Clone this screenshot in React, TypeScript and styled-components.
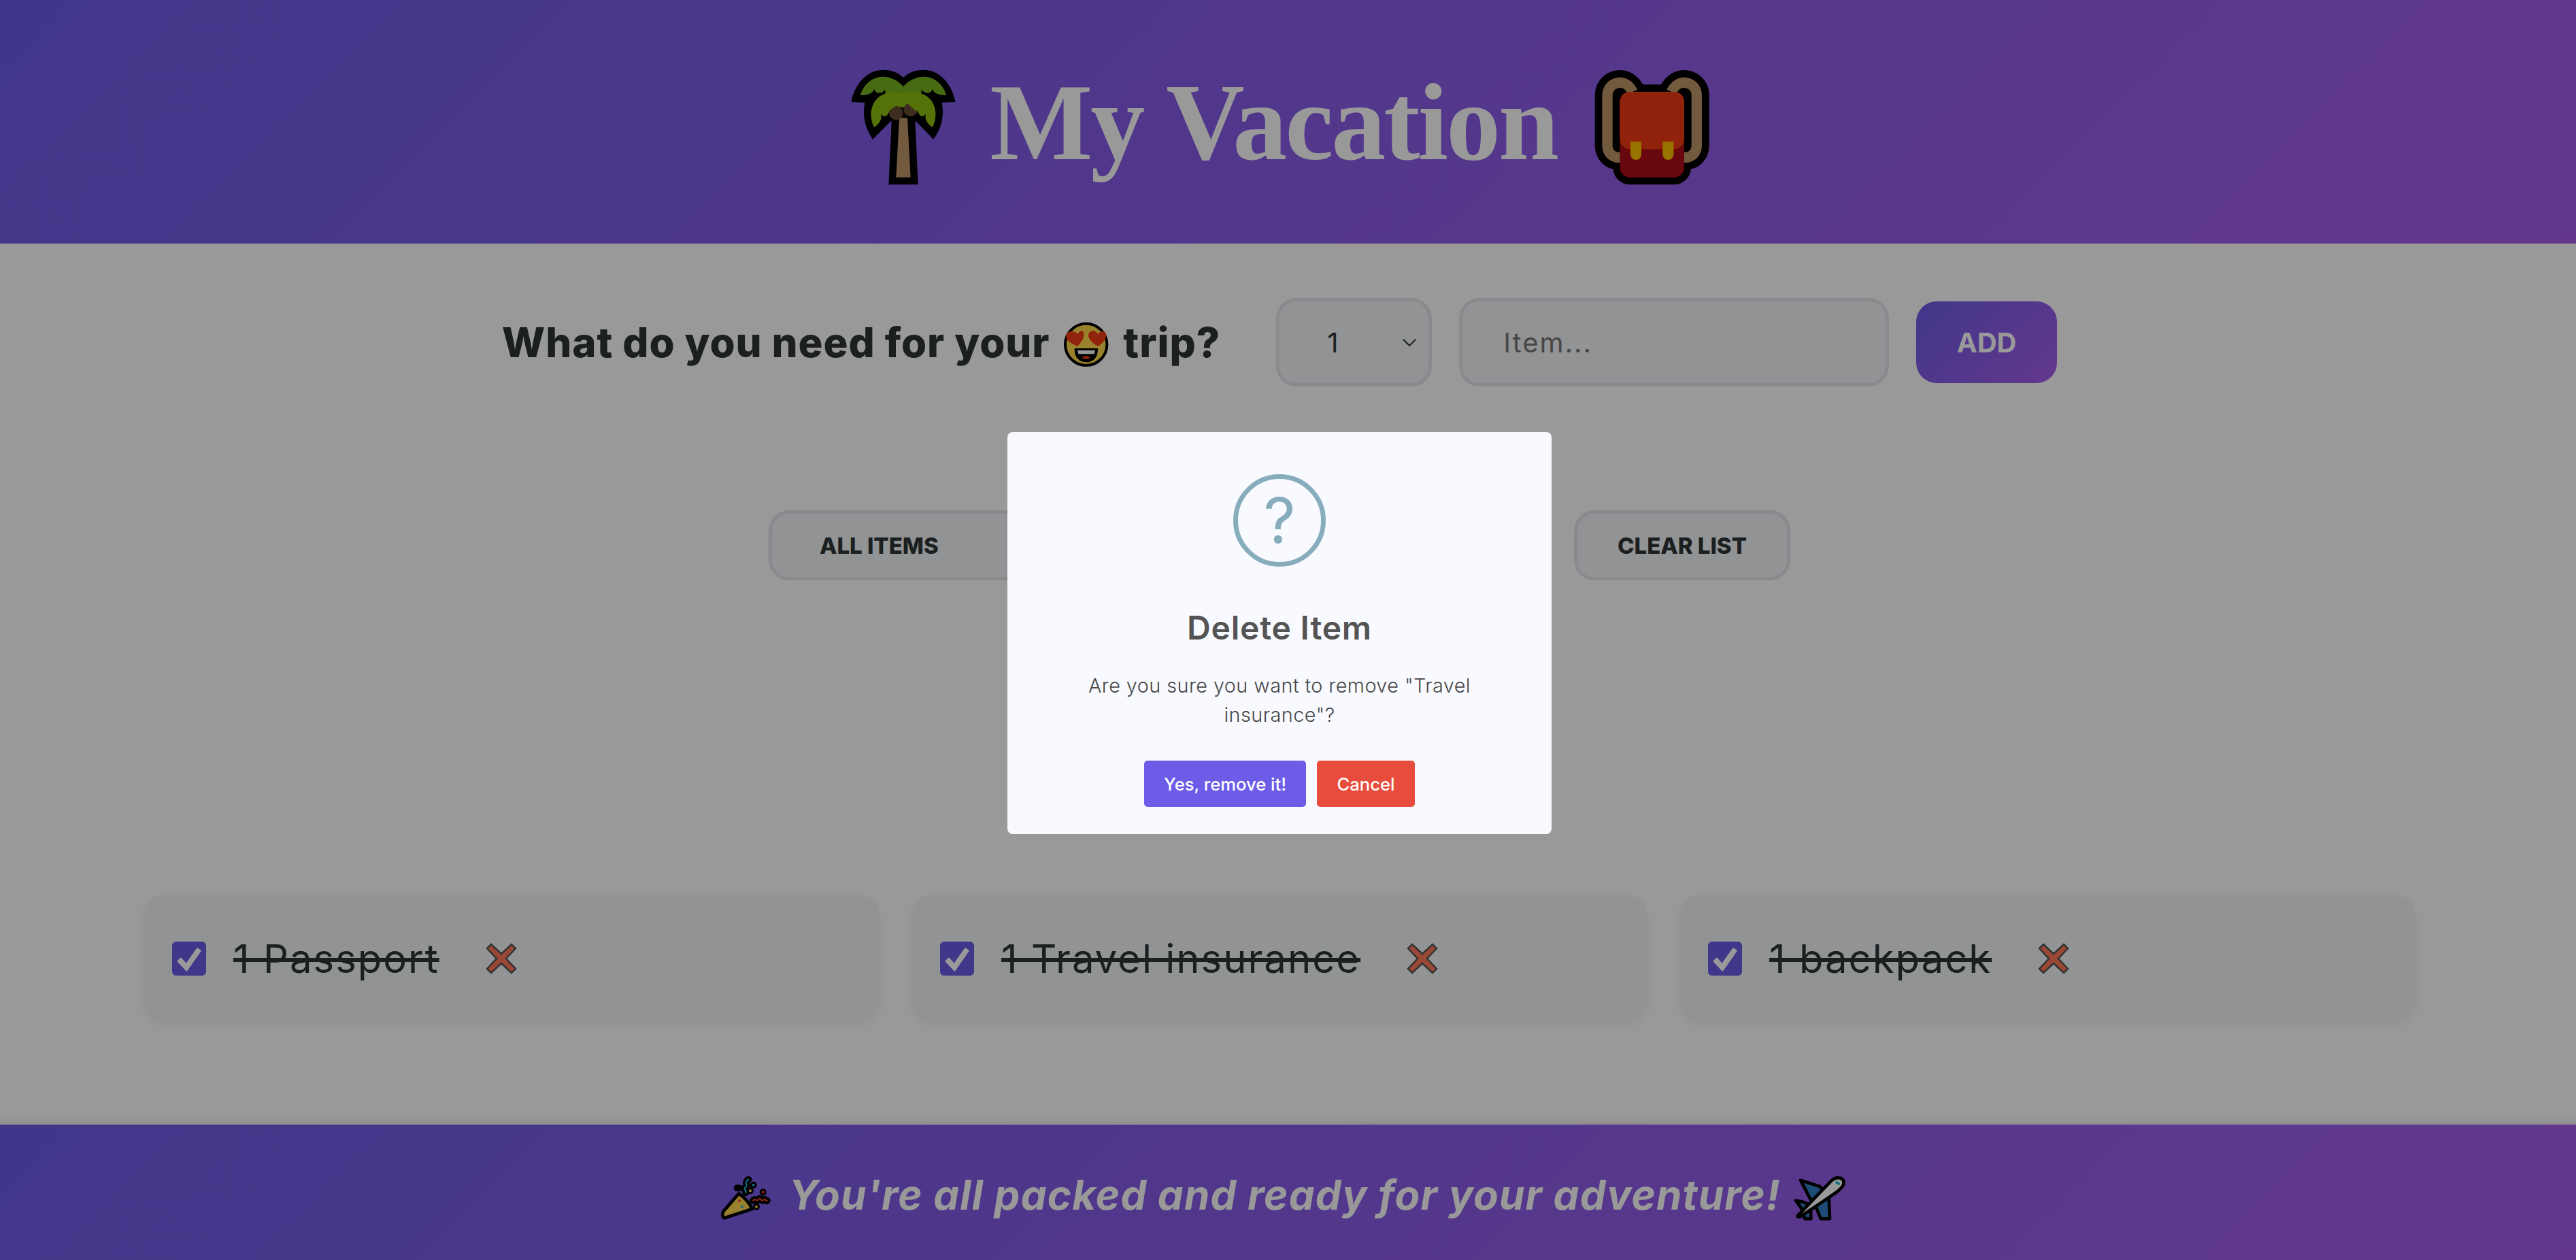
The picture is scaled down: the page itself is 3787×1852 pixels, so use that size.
import React from 'react';
import styled, { createGlobalStyle } from 'styled-components';

const Global = createGlobalStyle`
  * { box-sizing: border-box; }
  html, body { margin: 0; padding: 0; height: 100%; background: #fff; }
  body { font-family: Inter, "Noto Sans", sans-serif; color: #2d3436; overflow: hidden; }
`;

const Page = styled.div`
  height: 1852px;
  display: flex;
  flex-direction: column;
`;

const Header = styled.header`
  height: 358px;
  padding: 22px 37px 0 0;
  display: flex;
  align-items: center;
  justify-content: center;
  background: linear-gradient(135deg, #6c5ce7, #a55eea);
`;

const Title = styled.h1`
  margin: 0 33px 20px 27px;
  font-family: "Liberation Serif", serif;
  font-weight: 700;
  font-size: 160px;
  letter-spacing: -3px;
  line-height: 1;
  color: #fff;
  white-space: nowrap;
`;

const Emoji = styled.svg<{ $size: number }>`
  width: ${(p) => p.$size}px;
  height: ${(p) => p.$size}px;
  flex: none;
`;

const Main = styled.main`
  flex: 1;
  padding: 80px 25px 0 0;
  display: flex;
  flex-direction: column;
  align-items: center;
`;

const Form = styled.form`
  height: 130px;
  display: flex;
  align-items: center;
  margin: 0;
`;

const Question = styled.h2`
  margin: 0 82px 0 0;
  display: flex;
  align-items: center;
  gap: 14px;
  font-size: 60px;
  font-weight: 800;
  letter-spacing: 0.9px;
  color: #2d3436;
  white-space: nowrap;
`;

const SelectBox = styled.div`
  width: 229px;
  height: 130px;
  margin-right: 40px;
  padding: 0 18px 0 70px;
  display: flex;
  align-items: center;
  justify-content: space-between;
  border: 5px solid #e5e7ec;
  border-radius: 30px;
  background: #f4f6f8;
  font-size: 40px;
`;

const ItemInput = styled.input`
  width: 632px;
  height: 130px;
  margin-right: 40px;
  padding: 0 60px;
  border: 5px solid #e5e7ec;
  border-radius: 30px;
  background: #f4f6f8;
  font: 400 40px Inter, sans-serif;
  letter-spacing: 2px;
  &::placeholder { color: #757575; opacity: 1; }
`;

const AddButton = styled.button`
  width: 207px;
  height: 120px;
  border: 0;
  border-radius: 30px;
  background: linear-gradient(135deg, #6c5ce7, #a55eea);
  color: #fff;
  font: 700 40px Inter, sans-serif;
`;

const Filters = styled.div`
  margin-top: 182px;
  width: 1502px;
  display: flex;
  gap: 40px;
`;

const FilterBox = styled.div<{ $grow?: boolean }>`
  height: 103px;
  ${(p) => (p.$grow ? 'flex: 1; padding-left: 70px;' : 'width: 318px; justify-content: center;')}
  display: flex;
  align-items: center;
  border: 5px solid #e5e7ec;
  border-radius: 30px;
  background: #f4f6f8;
  font-size: 33px;
  font-weight: 800;
  color: #2d3436;
`;

const List = styled.ul`
  list-style: none;
  margin: 462px 0 0;
  padding: 0;
  width: 3340px;
  display: grid;
  grid-template-columns: repeat(3, 1fr);
  gap: 47px;
`;

const Card = styled.li`
  height: 188px;
  padding: 0 42px;
  display: flex;
  align-items: center;
  border-radius: 30px;
  background: #f4f6f8;
  box-shadow: 0 6px 18px rgba(0, 0, 0, 0.04);
`;

const Check = styled.svg`
  width: 50px;
  height: 50px;
  flex: none;
  margin-right: 40px;
`;

const ItemName = styled.span`
  font-size: 58px;
  font-weight: 400;
  letter-spacing: 2px;
  color: #2d3436;
  white-space: nowrap;
  text-decoration: line-through;
  text-decoration-thickness: 6px;
`;

const Remove = styled.svg`
  width: 46px;
  height: 46px;
  flex: none;
  margin-left: 68px;
`;

const Footer = styled.footer`
  height: 199px;
  padding-right: 25px;
  display: flex;
  align-items: center;
  justify-content: center;
  background: linear-gradient(135deg, #6c5ce7, #a55eea);
  box-shadow: 0 -3px 10px rgba(0, 0, 0, 0.1);
`;

const Farewell = styled.p`
  margin: 6px 7px 0 22px;
  font-size: 60px;
  font-style: italic;
  font-weight: 700;
  letter-spacing: 1.2px;
  color: #fff;
  white-space: nowrap;
`;

const Overlay = styled.div`
  position: fixed;
  inset: 0;
  padding: 9px 25px 0 0;
  display: flex;
  align-items: center;
  justify-content: center;
  background: rgba(0, 0, 0, 0.4);
`;

const Modal = styled.div`
  width: 800px;
  height: 591px;
  padding-top: 62px;
  display: flex;
  flex-direction: column;
  align-items: center;
  border-radius: 8px;
  background: #f8faff;
`;

const QuestionIcon = styled.div`
  width: 136px;
  height: 136px;
  display: flex;
  align-items: center;
  justify-content: center;
  border: 7px solid #87adbd;
  border-radius: 50%;
  color: #87adbd;
  font-size: 92px;
  font-weight: 400;
  line-height: 1;
`;

const ModalTitle = styled.h3`
  margin: 57px 0 0;
  font-size: 48px;
  line-height: 66px;
  font-weight: 600;
  letter-spacing: 0.8px;
  color: #545454;
`;

const ModalText = styled.p`
  margin: 30px 0 0;
  width: 640px;
  text-align: center;
  font-size: 28.8px;
  line-height: 43px;
  font-weight: 300;
  letter-spacing: 0.45px;
  color: #484848;
`;

const Actions = styled.div`
  margin-top: 46px;
  display: flex;
  gap: 16px;
`;

const ModalButton = styled.button<{ $tone: string; $width: number }>`
  width: ${(p) => p.$width}px;
  height: 68px;
  border: 0;
  border-radius: 5px;
  background: ${(p) => p.$tone};
  color: #fff;
  font: 500 25.6px Inter, sans-serif;
`;

const Palm = () => (
  <Emoji $size={200} viewBox="0 0 600 600">
    <path
      fill="#000"
      d="M70,180 C85,100 140,38 210,38 C250,38 280,52 300,72 C320,52 350,38 390,38 C460,38 515,100 530,180 L470,182 C482,250 465,300 433,344 L352,262 L365,544 L235,544 L248,262 L165,344 C135,300 118,250 130,182 Z"
    />
    <path
      fill="#76b221"
      d="M110,150 C125,100 165,68 210,68 C245,68 285,90 300,112 C315,90 355,68 390,68 C435,68 475,100 490,150 C465,150 435,145 428,122 C425,140 400,150 380,125 L380,150 L220,150 L220,125 C200,150 175,140 172,122 C165,145 135,150 110,150 Z"
    />
    <path fill="#bf9669" d="M282,250 L318,250 L332,512 L268,512 Z" />
    <circle cx="268" cy="228" r="31" fill="#644b32" />
    <circle cx="332" cy="212" r="31" fill="#644b32" />
    <path
      fill="#8ec00f"
      d="M172,292 C150,250 150,190 195,155 C225,135 280,130 300,145 C320,130 375,135 405,155 C450,190 450,250 428,292 C405,275 392,255 400,232 C388,250 370,245 362,215 C355,225 350,215 318,185 L300,205 L268,197 L240,215 C232,245 212,250 200,232 C208,255 195,275 172,292 Z"
    />
  </Emoji>
);

const Backpack = () => (
  <Emoji $size={200} viewBox="0 0 600 600">
    <g fill="none" strokeLinecap="round">
      <g stroke="#000" strokeWidth="110">
        <path d="M180,425 C140,425 123,400 123,370 L123,150 C123,115 150,94 180,94 C205,94 225,115 235,135" />
        <path d="M460,425 C500,425 517,400 517,370 L517,150 C517,115 490,94 460,94 C435,94 415,115 405,135" />
      </g>
    </g>
    <rect x="148" y="103" width="344" height="441" rx="75" fill="#000" />
    <g fill="none" stroke="#bf9669" strokeWidth="46">
      <path d="M180,425 C140,425 123,400 123,370 L123,150 C123,115 150,94 180,94 C205,94 225,115 235,135" />
      <path d="M460,425 C500,425 517,400 517,370 L517,150 C517,115 490,94 460,94 C435,94 415,115 405,135" />
    </g>
    <rect x="178" y="135" width="284" height="378" rx="46" fill="#af0d1a" />
    <path
      fill="#f23a14"
      d="M224,135 L416,135 C445,135 462,155 462,180 L462,340 C462,370 440,388 416,388 L224,388 C200,388 178,370 178,340 L178,180 C178,155 195,135 224,135 Z"
    />
    <path fill="#ffc000" d="M225,355 L273,355 L273,411 A24,24 0 0 1 225,411 Z" />
    <path fill="#ffc000" d="M367,355 L415,355 L415,411 A24,24 0 0 1 367,411 Z" />
  </Emoji>
);

const Heart = ({ d }: { d: string }) => <path fill="#f23a14" d={d} />;

const HeartEyes = () => (
  <Emoji $size={80} viewBox="0 0 240 240">
    <g transform="translate(-37 0)">
      <circle cx="156" cy="130" r="92" fill="#ffd94b" stroke="#000" strokeWidth="12" />
      <Heart d="M118,138 C85,125 65,110 68,90 C72,70 105,65 118,85 C130,62 150,68 146,92 C142,112 130,125 118,138 Z" />
      <Heart d="M208,138 C185,125 168,110 166,90 C166,66 198,62 208,85 C222,62 248,72 245,92 C242,112 228,125 208,138 Z" />
      <path d="M108,150 L205,150 C205,190 182,205 156,205 C130,205 108,190 108,150 Z" fill="#000" stroke="#000" strokeWidth="6" />
      <path d="M118,156 L196,156 L192,172 L122,172 Z" fill="#fff" />
      <path d="M138,191 C145,176 167,176 174,191 C165,194 147,194 138,191 Z" fill="#f23a14" />
    </g>
  </Emoji>
);

const Popper = () => (
  <Emoji $size={100} viewBox="0 0 300 300">
    <g fill="none" stroke="#000" strokeWidth="30" strokeLinecap="round" strokeLinejoin="round">
      <path d="M190,92 C165,110 195,115 175,128 C165,135 185,140 178,150" />
      <path d="M140,130 L150,130 M212,116 L212,116 M198,142 L198,142 M254,148 L254,148 M225,212 L225,212" />
      <path d="M210,185 C222,170 225,195 236,178 C245,170 248,195 258,180 C262,175 268,190 272,185" />
    </g>
    <path
      d="M84,262 C74,258 74,245 80,232 L148,154 C170,170 195,195 206,222 Z"
      fill="#ffd94b"
      stroke="#000"
      strokeWidth="14"
      strokeLinejoin="round"
    />
    <g fill="none" strokeWidth="6" strokeLinecap="round">
      <path stroke="#1fb6dd" d="M190,92 C165,110 195,115 175,128 C165,135 185,140 178,150" />
      <path stroke="#ee4030" d="M210,185 C222,170 225,195 236,178 C245,170 248,195 258,180 C262,175 268,190 272,185" />
    </g>
    <circle cx="150" cy="185" r="6" fill="#ee4030" />
    <circle cx="162" cy="212" r="6" fill="#1fb6dd" />
    <circle cx="212" cy="116" r="6" fill="#1fb6dd" />
    <circle cx="198" cy="142" r="6" fill="#ffe14d" />
    <circle cx="254" cy="148" r="6" fill="#ee4030" />
    <circle cx="225" cy="212" r="6" fill="#ffe14d" />
  </Emoji>
);

const Plane = () => (
  <Emoji $size={100} viewBox="0 0 300 300">
    <g stroke="#000" strokeWidth="14" strokeLinejoin="round">
      <path fill="#2f7fc4" d="M66,95 L150,122 L178,150 L125,180 L110,180 Z" />
      <path fill="#2f7fc4" d="M125,190 L190,150 L195,265 L155,265 Z" />
      <path fill="#2f7fc4" d="M45,185 L75,190 L110,205 L112,265 L85,265 L72,222 Z" />
      <path
        fill="#fff"
        d="M55,250 C95,210 150,150 205,95 C225,78 250,82 256,100 C260,118 245,130 232,142 C180,180 115,222 65,256 C55,258 48,256 55,250 Z"
      />
    </g>
    <ellipse cx="230" cy="108" rx="11" ry="6" transform="rotate(30 230 108)" fill="#1fb6dd" />
  </Emoji>
);

const Checkbox = () => (
  <Check viewBox="0 0 50 50">
    <rect width="50" height="50" rx="6" fill="#6c5ce7" />
    <path d="M10,26 L21,38 L40,11" fill="none" stroke="#fff" strokeWidth="8" />
  </Check>
);

const Cross = () => (
  <Remove viewBox="0 0 46 46">
    <path
      d="M8,2 L23,16 L38,2 L44,8 L30,23 L44,38 L38,44 L23,30 L8,44 L2,38 L16,23 L2,8 Z"
      fill="#ff7859"
      stroke="#555"
      strokeWidth="2.5"
    />
  </Remove>
);

const Chevron = () => (
  <svg width="20" height="11" viewBox="0 0 20 11">
    <path d="M1,1 L10,10 L19,1" fill="none" stroke="#2d3436" strokeWidth="2" />
  </svg>
);

const items = ['1 Passport', '1 Travel insurance', '1 backpack'];

export default function App() {
  return (
    <>
      <Global />
      <Page>
        <Header>
          <Palm />
          <Title>My Vacation</Title>
          <Backpack />
        </Header>
        <Main>
          <Form>
            <Question>
              <span>What do you need for your</span>
              <HeartEyes />
              <span>trip?</span>
            </Question>
            <SelectBox>
              <span>1</span>
              <Chevron />
            </SelectBox>
            <ItemInput placeholder="Item..." readOnly />
            <AddButton type="button">ADD</AddButton>
          </Form>
          <Filters>
            <FilterBox $grow>ALL ITEMS</FilterBox>
            <FilterBox>CLEAR LIST</FilterBox>
          </Filters>
          <List>
            {items.map((item) => (
              <Card key={item}>
                <Checkbox />
                <ItemName>{item}</ItemName>
                <Cross />
              </Card>
            ))}
          </List>
        </Main>
        <Footer>
          <Popper />
          <Farewell>You're all packed and ready for your adventure!</Farewell>
          <Plane />
        </Footer>
      </Page>
      <Overlay>
        <Modal>
          <QuestionIcon>?</QuestionIcon>
          <ModalTitle>Delete Item</ModalTitle>
          <ModalText>Are you sure you want to remove "Travel insurance"?</ModalText>
          <Actions>
            <ModalButton type="button" $tone="#6c5ce7" $width={238}>
              Yes, remove it!
            </ModalButton>
            <ModalButton type="button" $tone="#e74c3c" $width={144}>
              Cancel
            </ModalButton>
          </Actions>
        </Modal>
      </Overlay>
    </>
  );
}
